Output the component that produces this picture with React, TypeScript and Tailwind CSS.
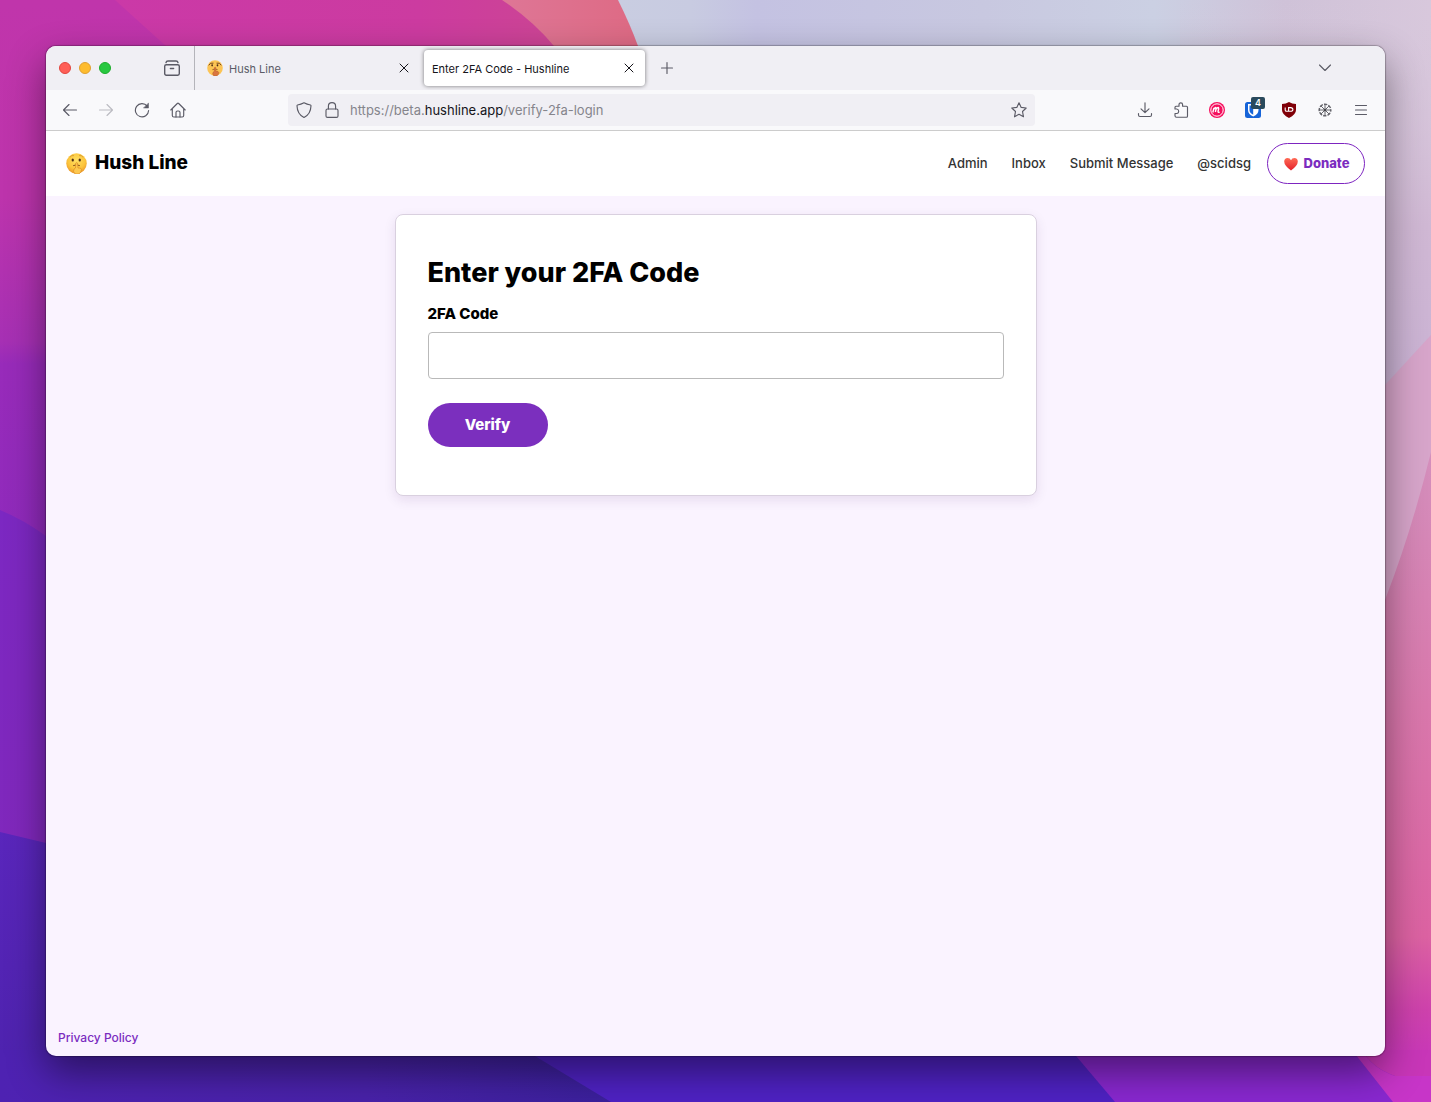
import React from "react";

function Wallpaper() {
  return (
    <svg
      className="absolute inset-0 h-full w-full"
      viewBox="0 0 1431 1102"
      preserveAspectRatio="none"
      aria-hidden="true"
    >
      <defs>
        <linearGradient id="wp-left" x1="0" y1="0" x2="0" y2="560" gradientUnits="userSpaceOnUse">
          <stop offset="0" stopColor="#c035ab" />
          <stop offset="0.35" stopColor="#bd34ac" />
          <stop offset="0.61" stopColor="#a630b4" />
          <stop offset="0.65" stopColor="#982bba" />
          <stop offset="1" stopColor="#8e2abc" />
        </linearGradient>
        <linearGradient id="wp-pink" x1="0" y1="0" x2="1" y2="0">
          <stop offset="0" stopColor="#ca38aa" />
          <stop offset="0.7" stopColor="#cc3ba0" />
          <stop offset="1" stopColor="#cc4890" />
        </linearGradient>
        <linearGradient id="wp-coral" x1="502" y1="0" x2="638" y2="0" gradientUnits="userSpaceOnUse">
          <stop offset="0" stopColor="#de7696" />
          <stop offset="1" stopColor="#de6a84" />
        </linearGradient>
        <linearGradient id="wp-sky" x1="618" y1="0" x2="1431" y2="0" gradientUnits="userSpaceOnUse">
          <stop offset="0" stopColor="#c9cde1" />
          <stop offset="0.09" stopColor="#c8cbe1" />
          <stop offset="0.17" stopColor="#c4c2e2" />
          <stop offset="0.45" stopColor="#c8c8e0" />
          <stop offset="0.66" stopColor="#cbd0e3" />
          <stop offset="0.82" stopColor="#cfc2d8" />
          <stop offset="1" stopColor="#d8c8dc" />
        </linearGradient>
        <linearGradient id="wp-right" x1="0" y1="0" x2="0" y2="450" gradientUnits="userSpaceOnUse">
          <stop offset="0" stopColor="#d8c8dc" stopOpacity="0" />
          <stop offset="0.5" stopColor="#d0b8d4" />
          <stop offset="1" stopColor="#c8b0d4" />
        </linearGradient>
        <linearGradient id="wp-rose" x1="0" y1="440" x2="0" y2="1102" gradientUnits="userSpaceOnUse">
          <stop offset="0" stopColor="#d490bd" />
          <stop offset="0.4" stopColor="#d978ac" />
          <stop offset="0.75" stopColor="#dc62a2" />
          <stop offset="0.86" stopColor="#ce42ac" />
          <stop offset="1" stopColor="#c42ec4" />
        </linearGradient>
        <linearGradient id="wp-violet" x1="0" y1="510" x2="0" y2="850" gradientUnits="userSpaceOnUse">
          <stop offset="0" stopColor="#7c28c2" />
          <stop offset="1" stopColor="#8028bc" />
        </linearGradient>
        <linearGradient id="wp-indigo" x1="0" y1="830" x2="0" y2="1102" gradientUnits="userSpaceOnUse">
          <stop offset="0" stopColor="#5a26bc" />
          <stop offset="1" stopColor="#4c22ac" />
        </linearGradient>
        <linearGradient id="wp-indigo-dark" x1="0" y1="0" x2="611" y2="0" gradientUnits="userSpaceOnUse">
          <stop offset="0" stopColor="#4e22b2" />
          <stop offset="0.6" stopColor="#4922aa" />
          <stop offset="1" stopColor="#3b209c" />
        </linearGradient>
      </defs>
      <rect width="1431" height="1102" fill="url(#wp-sky)" />
      <rect x="1180" width="251" height="700" fill="url(#wp-right)" />
      <path d="M480 0H618Q630 24 638 46V200H480Z" fill="url(#wp-coral)" />
      <path d="M0 0H502Q532 20 554 46L600 200V600H0Z" fill="url(#wp-pink)" />
      <path d="M0 0H115L166 46V560H0Z" fill="url(#wp-left)" />
      <path d="M0 510Q24 520 46 536L200 600V900H0Z" fill="url(#wp-violet)" />
      <path d="M0 832L46 843L400 860V1102H0Z" fill="url(#wp-indigo)" />
      <path d="M1385 385L1431 335V620H1300Z" fill="#d7a5ca" />
      <path d="M1431 452Q1412 530 1385 600L1300 820V1102H1431Z" fill="url(#wp-rose)" />
      <path d="M500 1050H1120V1102H500Z" fill="#4f22c4" />
      <path d="M0 1050H525L611 1102H0Z" fill="url(#wp-indigo-dark)" />
      <path d="M1071 1050L1115 1102H1431V1050Z" fill="#8928d0" />
      <path d="M1352 1050L1393 1102H1431V1076H1395Q1372 1068 1362 1050Z" fill="#c735c8" />
      <path d="M1362 1050Q1372 1068 1395 1076H1431V1050Z" fill="#c836b8" />
    </svg>
  );
}

function HushFace({ className, muted = false }: { className: string; muted?: boolean }) {
  return (
    <svg className={className} viewBox="0 0 42 42" aria-hidden="true">
      <defs>
        <radialGradient id="face-fill" cx="0.5" cy="0.35" r="0.65">
          <stop offset="0" stopColor="#ffe063" />
          <stop offset="0.65" stopColor="#fcc43b" />
          <stop offset="1" stopColor="#eb962b" />
        </radialGradient>
      </defs>
      <circle cx="21" cy="21" r="20.5" fill={muted ? "#fcc454" : "url(#face-fill)"} />
      <path
        d={muted ? "M5 13Q8 6 16 8M26 8Q34 6 37 13" : "M8 8Q11 4 15 5M27 5Q31 4 34 8"}
        fill="none"
        stroke={muted ? "#7b4a20" : "#c98a2a"}
        strokeWidth={muted ? 2.6 : 1.4}
        strokeLinecap="round"
      />
      <ellipse cx="13.500" cy="14" rx="2.3" ry="3" fill="#4f2e17" />
      <ellipse cx="27.500" cy="14" rx="2.3" ry="3" fill="#4f2e17" />
      <path d="M15 25Q21 22 27 25" fill="none" stroke="#8a4f1c" strokeWidth="2" strokeLinecap="round" />
      <path
        d="M19.500 20Q21.500 18 23 20L24 30Q30 29 31 33Q31 38 26 42H18Q13 36 16 32L19 30Z"
        fill={muted ? "#d9763f" : "#fdc850"}
        stroke={muted ? "#b85a2c" : "#dc8a22"}
        strokeWidth="1.3"
      />
    </svg>
  );
}

type GlyphProps = { children: React.ReactNode; className?: string };

function Glyph({ children, className = "size-4" }: GlyphProps) {
  return (
    <svg
      className={className}
      viewBox="0 0 16 16"
      fill="none"
      stroke="currentColor"
      strokeWidth="1.15"
      strokeLinecap="round"
      strokeLinejoin="round"
      aria-hidden="true"
    >
      {children}
    </svg>
  );
}

function ToolButton({ label, children, className = "text-[#5b5b66]" }: { label: string; children: React.ReactNode; className?: string }) {
  return (
    <button type="button" aria-label={label} className={`flex h-8 w-9 shrink-0 items-center justify-center ${className}`}>
      {children}
    </button>
  );
}

function CloseGlyph() {
  return (
    <Glyph>
      <path d="M4 4L12 12M12 4L4 12" strokeWidth="1" />
    </Glyph>
  );
}

function TabStrip() {
  return (
    <div className="flex h-11 items-center bg-[#f0eff4]">
      <div className="flex h-full w-[149px] shrink-0 items-center border-r border-[#b4b4ba] pl-[13px]">
        <div className="flex gap-2">
          <span className="size-3 rounded-full border border-[#e2463f] bg-[#ff5f57]" />
          <span className="size-3 rounded-full border border-[#e0a030] bg-[#febc2e]" />
          <span className="size-3 rounded-full border border-[#1dad2b] bg-[#28c840]" />
        </div>
        <button type="button" aria-label="View recent browsing" className="ml-[53px] text-[#5b5b66]">
          <Glyph>
            <path d="M2 2.600Q2.300 1 4 1H12Q13.700 1 14 2.600" strokeWidth="1.400" />
            <rect x="0.700" y="4.700" width="14.600" height="10.500" rx="1.600" strokeWidth="1.400" />
            <path d="M6.400 8.500H9.600" strokeWidth="1.400" />
          </Glyph>
        </button>
      </div>
      <div className="flex h-full w-[229px] items-center pl-3 pr-3">
        <HushFace className="size-4 shrink-0" muted />
        <span className="ml-[6px] flex-1 truncate pt-0.5 text-[11px] text-[#5b5b66]">Hush Line</span>
        <button type="button" aria-label="Close Hush Line" className="text-[#15141a]">
          <CloseGlyph />
        </button>
      </div>
      <div className="flex h-9 w-[221px] items-center rounded bg-white pl-2 pr-2 shadow-[0_0_4px_rgba(0,0,0,0.5)]">
        <span className="flex-1 truncate pt-0.5 text-[11px] text-[#15141a]">Enter 2FA Code - Hushline</span>
        <button type="button" aria-label="Close Enter 2FA Code" className="text-[#15141a]">
          <CloseGlyph />
        </button>
      </div>
      <button type="button" aria-label="New tab" className="ml-[14px] text-[#5b5b66]">
        <Glyph>
          <path d="M8 2.500V13.500M2.500 8H13.500" />
        </Glyph>
      </button>
      <button type="button" aria-label="List all tabs" className="ml-auto mr-[52px] text-[#5b5b66]">
        <Glyph>
          <path d="M2.500 5L8 10.500L13.500 5" />
        </Glyph>
      </button>
    </div>
  );
}

function Toolbar() {
  return (
    <div className="flex h-[41px] items-center border-b border-[#cccccc] bg-[#f9f9fb] px-[6px]">
      <ToolButton label="Back">
        <Glyph>
          <path d="M14.500 8H1.500M7 2.500L1.500 8L7 13.500" />
        </Glyph>
      </ToolButton>
      <ToolButton label="Forward" className="text-[#bcbcc2]">
        <Glyph>
          <path d="M1.500 8H14.500M9 2.500L14.500 8L9 13.500" />
        </Glyph>
      </ToolButton>
      <ToolButton label="Reload">
        <Glyph>
          <path d="M13.200 4.200A6.600 6.600 0 1 0 14.600 8.500" />
          <path d="M14.500 1.300V6H9.800Z" fill="currentColor" strokeWidth="0.500" />
        </Glyph>
      </ToolButton>
      <ToolButton label="Home">
        <Glyph>
          <path d="M.8 8L7.300 1.500Q8 .9 8.700 1.500L15.200 8M2.300 7V13.500Q2.300 15 3.800 15H12.200Q13.700 15 13.700 13.500V7" />
          <path d="M6 15V10.500Q6 9 7.500 9H8.500Q10 9 10 10.500V15" />
        </Glyph>
      </ToolButton>
      <div className="ml-[92px] mr-[92px] flex h-8 flex-1 items-center rounded bg-[#f0eff4] px-2 text-[#5b5b66]">
        <Glyph>
          <path d="M8 .8Q5 2.500 1.500 3Q1 3.100 1 3.700Q1.200 12 8 15.500Q14.800 12 15 3.700Q15 3.100 14.500 3Q11 2.500 8 .8Z" />
        </Glyph>
        <Glyph className="ml-3 size-4">
          <rect x="2" y="7" width="12" height="8.400" rx="1.500" />
          <path d="M4.400 7V4.200Q4.400 .6 8 .6Q11.600 .6 11.600 4.200V7" />
        </Glyph>
        <div role="textbox" aria-label="Address" tabIndex={0} className="ml-[10px] flex-1 whitespace-nowrap pt-0.5 text-[13px] text-[#85858c]">
          https://beta.<span className="text-[#15141a]">hushline.app</span>/verify-2fa-login
        </div>
        <button type="button" aria-label="Bookmark this page">
          <Glyph>
            <path d="M8 .8L10.200 5.400L15.200 6L11.500 9.500L12.500 14.800L8 12.300L3.500 14.800L4.500 9.500L.8 6L5.800 5.400Z" />
          </Glyph>
        </button>
      </div>
      <ToolButton label="Downloads">
        <Glyph>
          <path d="M8 .8V10.500M4 6.800L8 10.700L12 6.800M1.500 11.500V13Q1.500 14.500 3 14.500H13Q14.500 14.500 14.500 13V11.500" />
        </Glyph>
      </ToolButton>
      <ToolButton label="Extensions">
        <Glyph>
          <path d="M2 7V5.200Q2 4.200 3 4.200H6V2.700Q6 .8 7.800 .8Q9.600 .8 9.600 2.700V4.200H13.500Q14.500 4.200 14.500 5.200V14.200Q14.500 15.200 13.500 15.200H3.500Q2 15.200 2 13.700V11.500H4Q5.700 11.300 5.700 9.300Q5.700 7.300 3.800 7Z" />
        </Glyph>
      </ToolButton>
      <ToolButton label="Monolith">
        <svg className="size-4" viewBox="0 0 16 16" fill="none" aria-hidden="true">
          <circle cx="8" cy="8" r="8" fill="#f50f5d" />
          <circle cx="8" cy="8" r="6.200" stroke="white" strokeWidth="1" />
          <path d="M3.800 10.500L5 5.800M4.800 7.200Q7.400 4 7 7L6.400 10M7 7.200Q10 4 9.600 7L9 9.500Q9 11 10.800 10" stroke="white" strokeWidth="1.400" />
        </svg>
      </ToolButton>
      <ToolButton label="Bitwarden">
        <span className="relative">
          <svg className="size-4" viewBox="0 0 16 16" aria-hidden="true">
            <rect width="16" height="16" rx="2.500" fill="#1664d8" />
            <path d="M3 2H13.500V8Q13.500 12 8.200 14.500Q3 12 3 8Z" fill="white" />
            <path d="M4.500 3.500H8.200V12.800Q4.500 11 4.500 8Z" fill="#1664d8" />
          </svg>
          <span className="absolute -top-[5px] left-[6px] flex h-3 w-[14px] items-center justify-center rounded-[2px] bg-[#2a4a5c] text-[9px] font-semibold text-white">
            4
          </span>
        </span>
      </ToolButton>
      <ToolButton label="uBlock Origin">
        <svg className="size-4" viewBox="0 0 16 16" aria-hidden="true">
          <path d="M8 0Q11 1.800 15 2V8Q15 12.500 8 16Q1 12.500 1 8V2Q5 1.800 8 0Z" fill="#800008" />
          <path d="M4.200 5.600V8Q4.200 9.300 5.500 9.300H7.600V5.600H9.600Q11.900 5.700 11.900 7.500Q11.900 9.300 9.600 9.300H7.600" fill="none" stroke="white" strokeWidth="1.100" />
        </svg>
      </ToolButton>
      <ToolButton label="Privacy Badge">
        <svg className="size-4" viewBox="0 0 16 16" fill="none" stroke="#65656b" aria-hidden="true">
          <circle cx="8" cy="8" r="5.800" strokeWidth="1.500" strokeDasharray="3.400 1.150" strokeDashoffset="1.700" />
          <path d="M8 2V14M2 8H14M3.800 3.800L12.200 12.200M12.200 3.800L3.800 12.200" strokeWidth="1" />
          <circle cx="8" cy="8" r="1.300" fill="#45454a" stroke="none" />
        </svg>
      </ToolButton>
      <ToolButton label="Application menu">
        <Glyph>
          <path d="M2.500 3.500H13.500M2.500 8H13.500M2.500 12.500H13.500" />
        </Glyph>
      </ToolButton>
    </div>
  );
}

function Heart() {
  return (
    <svg className="h-[14px] w-4" viewBox="0 0 16 14" aria-hidden="true">
      <defs>
        <linearGradient id="heart-fill" x1="0" y1="0" x2="0" y2="1">
          <stop offset="0" stopColor="#ff6a55" />
          <stop offset="1" stopColor="#e3202b" />
        </linearGradient>
      </defs>
      <path d="M8 13.500Q1.200 8.500 1.200 4.500Q1.300 1 4.600 1Q7 1 8 3.200Q9 1 11.400 1Q14.700 1 14.800 4.500Q14.800 8.500 8 13.500Z" fill="url(#heart-fill)" />
    </svg>
  );
}

function SiteHeader() {
  return (
    <header className="flex h-[65px] items-center justify-between bg-white px-5">
      <a href="#home" className="flex items-center gap-2 text-[19px] font-extrabold text-black">
        <HushFace className="size-[21px]" />
        Hush Line
      </a>
      <nav className="flex items-center gap-6 text-[13px] font-medium text-[#333333]">
        <a href="#admin">Admin</a>
        <a href="#inbox">Inbox</a>
        <a href="#submit">Submit Message</a>
        <a href="#scidsg">@scidsg</a>
        <a
          href="#donate"
          className="-ml-2 flex h-[41px] w-[98px] items-center justify-center gap-[5px] rounded-full border border-[#7d25c0] font-extrabold text-[#7b2cbf]"
        >
          <Heart />
          Donate
        </a>
      </nav>
    </header>
  );
}

function VerifyCard() {
  return (
    <form
      className="mx-auto w-full max-w-[642px] rounded-lg border border-[#d9d0df] bg-white px-8 pb-12 pt-10 shadow-[0_4px_12px_rgba(60,20,90,0.1)]"
      onSubmit={(event) => event.preventDefault()}
    >
      <h2 className="text-[27px] font-extrabold leading-9 text-black">Enter your 2FA Code</h2>
      <label htmlFor="code" className="mt-3 block text-[15px] font-extrabold leading-[21px] text-black">
        2FA Code
      </label>
      <input
        id="code"
        type="text"
        autoComplete="one-time-code"
        className="mt-2 block h-[47px] w-full rounded border border-[#b9b9b9] bg-white px-3 text-base"
      />
      <button type="submit" className="mt-6 flex h-11 w-[120px] items-center justify-center rounded-full bg-[#7b2fbe] text-[15px] font-extrabold text-white">
        Verify
      </button>
    </form>
  );
}

export default function App() {
  return (
    <div className="relative flex min-h-screen overflow-hidden p-[46px] font-['Inter',sans-serif]">
      <Wallpaper />
      <div className="relative flex min-w-0 flex-1 flex-col rounded-[10px] shadow-[0_0_1px_1px_rgba(0,0,0,0.25),0_16px_38px_rgba(0,0,0,0.45)]">
        <div className="flex flex-1 flex-col overflow-hidden rounded-[10px] bg-[#faf3ff]">
          <TabStrip />
          <Toolbar />
          <SiteHeader />
          <main className="flex-1 px-4 pt-[18px]">
            <VerifyCard />
          </main>
          <footer className="px-3 pb-2 text-xs font-medium leading-5 text-[#7b2cbf]">
            <a href="#privacy">Privacy Policy</a>
          </footer>
        </div>
      </div>
    </div>
  );
}
